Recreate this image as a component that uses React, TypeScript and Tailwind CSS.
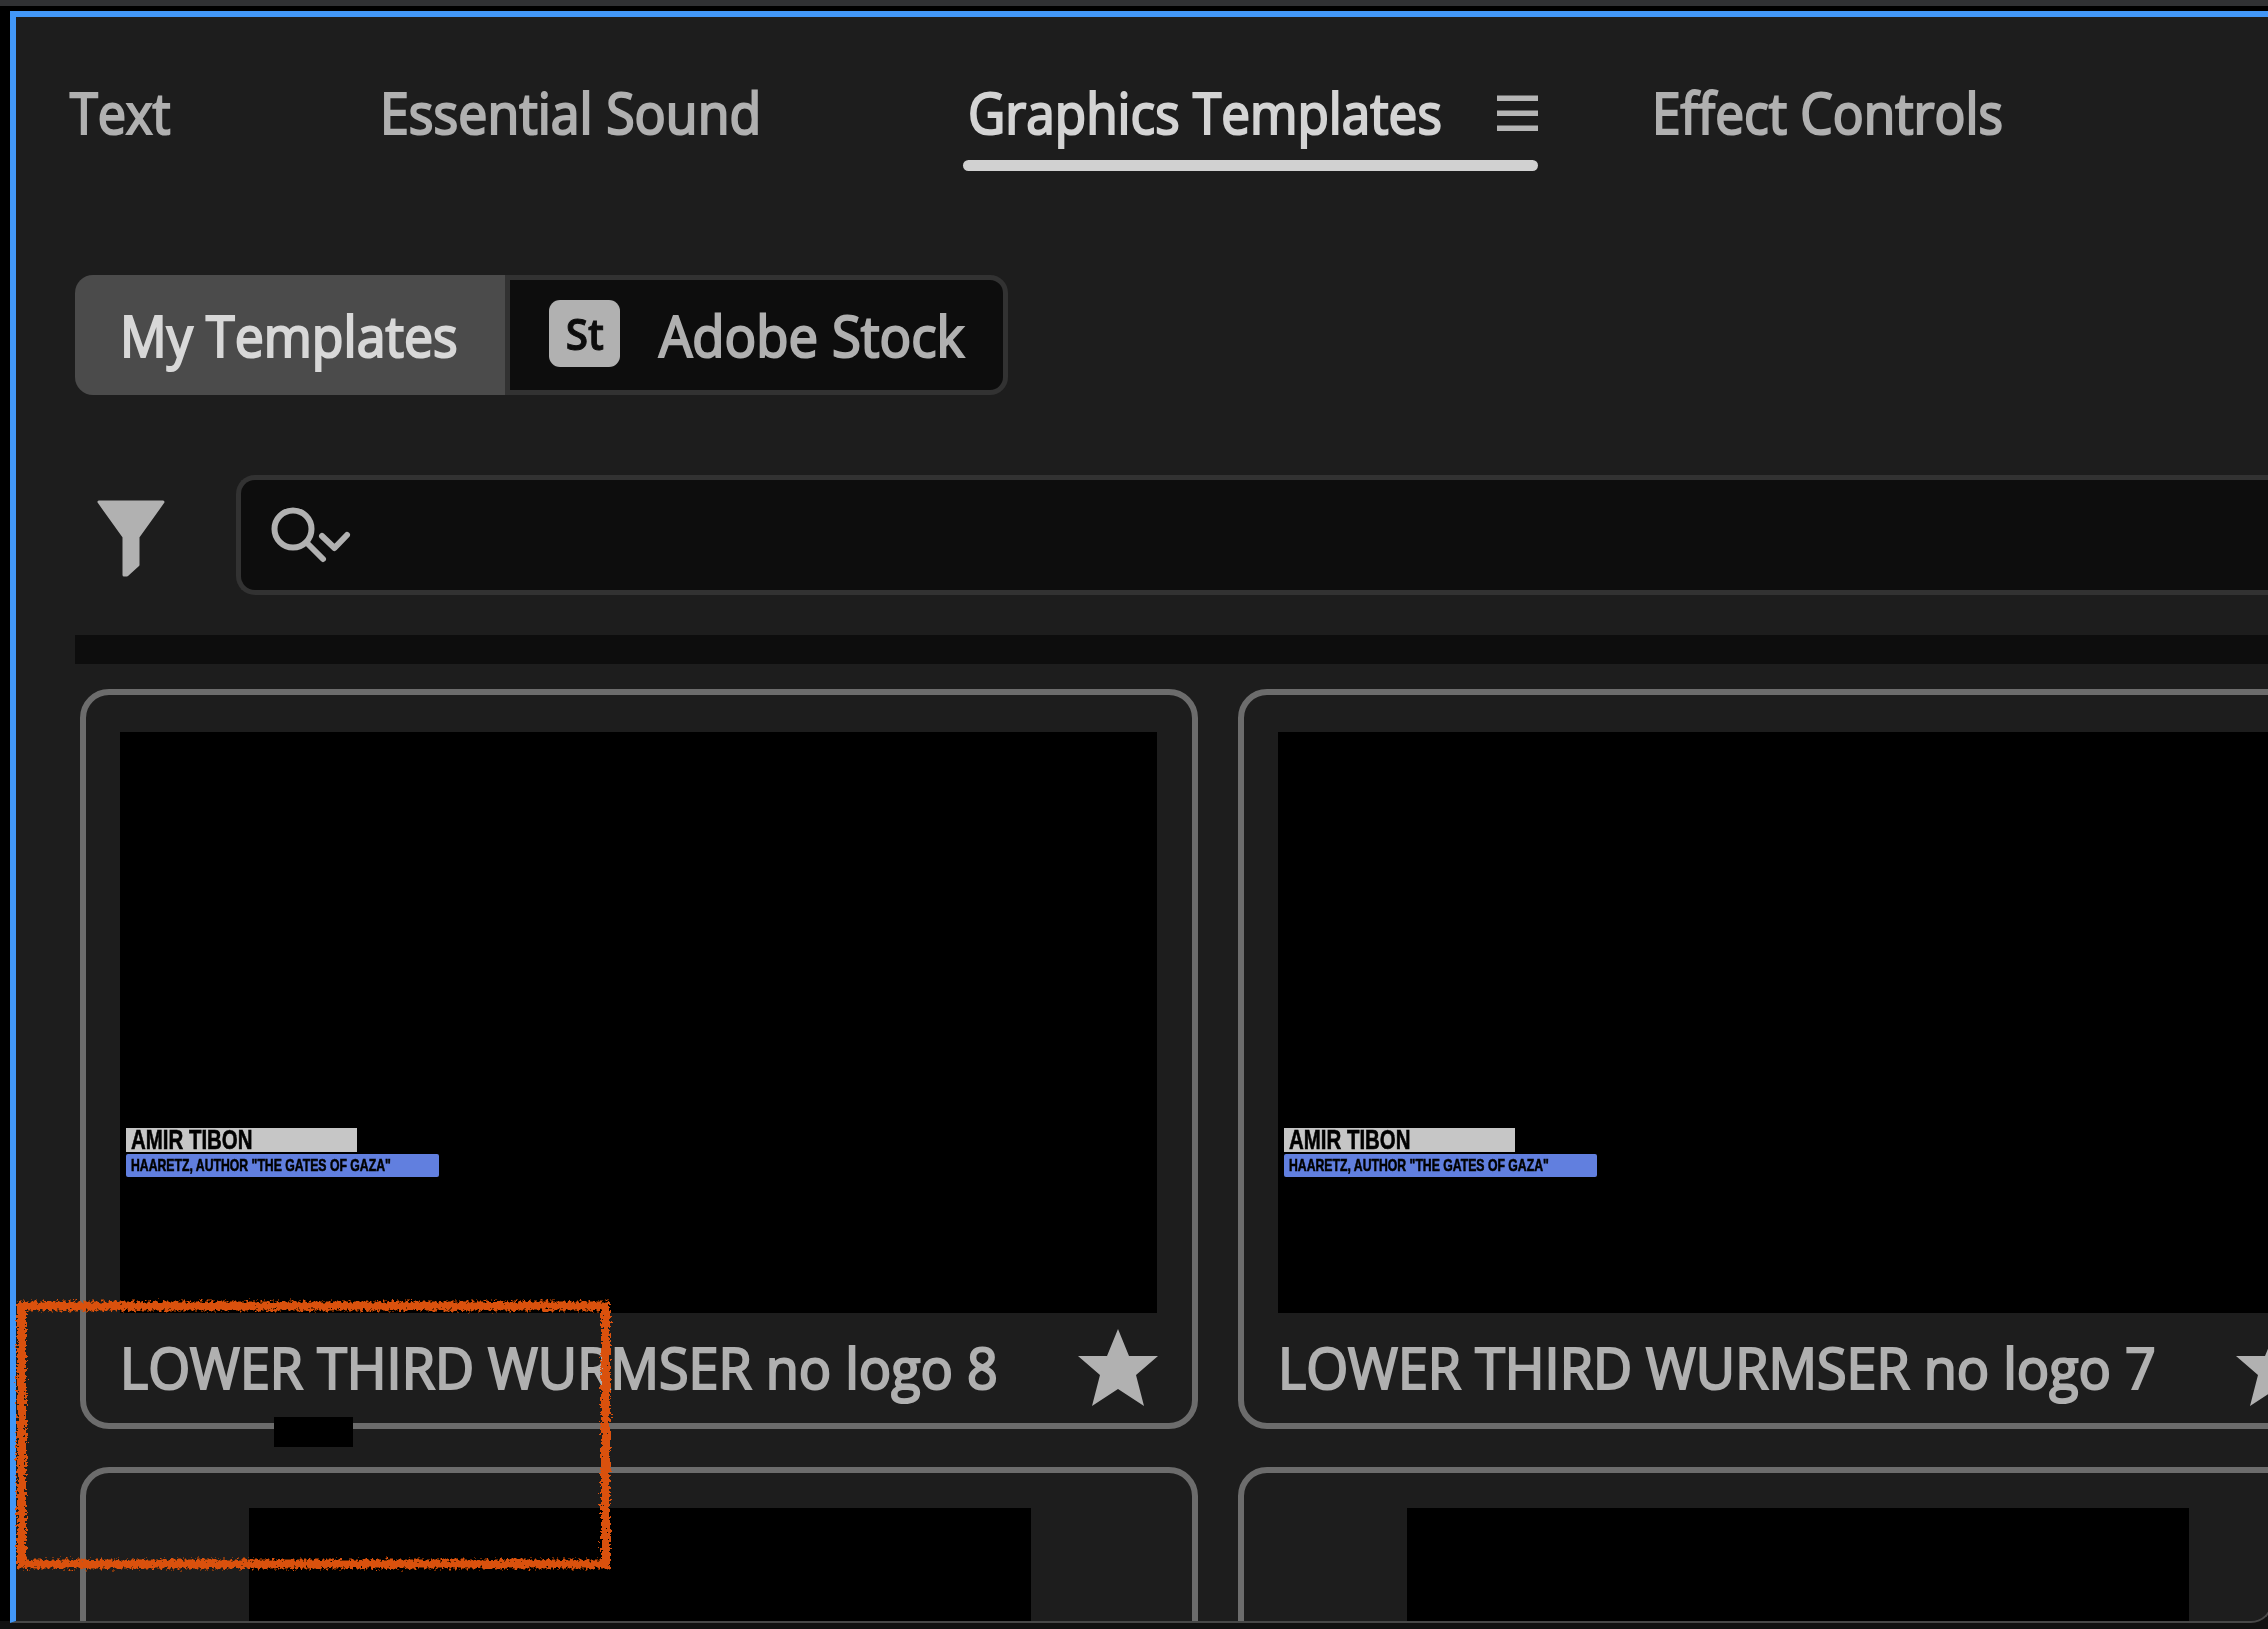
import React from 'react';
import { clsx } from 'clsx';

type Template = {
  name: string;
  wide: boolean;
};

const TEMPLATES: Template[] = [
  { name: 'LOWER THIRD WURMSER no logo 8', wide: true },
  { name: 'LOWER THIRD WURMSER no logo 7', wide: true },
  { name: '', wide: false },
  { name: '', wide: false },
];

function Label({ className, children }: { className?: string; children: React.ReactNode }) {
  return (
    <span
      className={clsx(
        'block origin-left whitespace-nowrap text-[57px] leading-[80px] [-webkit-text-stroke:2.2px_currentColor]',
        className
      )}
    >
      {children}
    </span>
  );
}

function Tabs() {
  return (
    <nav className="flex h-[258px] text-[#b0b0b0]">
      <div className="ml-[54px] w-[310px] pt-[55px]">
        <Label className="scale-x-[0.885]">Text</Label>
      </div>
      <div className="w-[583px] pt-[55px]">
        <Label className="scale-x-[0.91]">Essential Sound</Label>
      </div>
      <div className="w-[575px] pt-[55px] text-[#d4d4d4]">
        <div className="flex h-[88px] justify-between">
          <div className="ml-[5px] w-[480px]">
            <Label className="scale-x-[0.9]">Graphics Templates</Label>
          </div>
          <svg viewBox="0 0 41 38" className="mt-[22px] h-[38px] w-[41px] shrink-0 fill-[#b5b5b5]">
            <rect y="1.500" width="41" height="5.500" />
            <rect y="16.500" width="41" height="5.500" />
            <rect y="31.500" width="41" height="5.500" />
          </svg>
        </div>
        <div className="h-[11px] rounded-full bg-[#d1d1d1]" />
      </div>
      <div className="ml-[114px] pt-[55px]">
        <Label className="scale-x-[0.902]">Effect Controls</Label>
      </div>
    </nav>
  );
}

function SourceSwitch() {
  return (
    <div className="ml-[59px] flex h-[120px] w-[933px]">
      <button className="w-[430px] rounded-l-[18px] bg-[#4b4b4b] pl-[45px] text-left text-[#d8d8d8]">
        <Label className="scale-x-[0.91]">My Templates</Label>
      </button>
      <button className="flex flex-1 items-center rounded-r-[18px] border-[5px] border-[#323232] bg-[#0d0d0d] pl-[39px] text-left text-[#b0b0b0]">
        <span className="mb-[4px] flex h-[67px] w-[71px] shrink-0 items-center justify-center rounded-[11px] bg-[#b1b1b1] text-[44px] font-semibold text-[#0d0d0d]">
          <span className="scale-x-[0.92] [-webkit-text-stroke:1px_currentColor]">St</span>
        </span>
        <Label className="ml-[39px] scale-x-[0.925]">Adobe Stock</Label>
      </button>
    </div>
  );
}

function SearchRow() {
  return (
    <div className="mt-[80px] flex h-[120px]">
      <svg viewBox="0 0 70 78" className="mt-[25px] ml-[80px] h-[78px] w-[70px] shrink-0">
        <path
          d="M3 2H67L42 37V65L31 75H28V37Z"
          fill="#b1b1b1"
          stroke="#b1b1b1"
          strokeWidth="3"
          strokeLinejoin="round"
        />
      </svg>
      <div className="ml-[70px] flex-1 rounded-l-[19px] border-[5px] border-r-0 border-[#323232] bg-[#0d0d0d]">
        <svg
          viewBox="0 0 90 70"
          className="mt-[20px] ml-[25px] h-[70px] w-[90px] fill-none stroke-[#b1b1b1] stroke-[6]"
          strokeLinecap="round"
          strokeLinejoin="round"
        >
          <circle cx="27" cy="29" r="18.5" />
          <path d="M41 43L57 59" />
          <path d="M56 36L68.500 48L81 35" />
        </svg>
      </div>
    </div>
  );
}

function LowerThird() {
  return (
    <div className="flex flex-col items-start gap-[2px] pt-[396px] pl-[6px] font-['Liberation_Sans',sans-serif] font-bold text-black">
      <div className="h-[24px] w-[231px] bg-[#c6c6c6] pl-[5px]">
        <span className="block origin-left scale-x-[0.73] text-[28px] leading-[23px] whitespace-nowrap [-webkit-text-stroke:0.6px_currentColor]">
          AMIR TIBON
        </span>
      </div>
      <div className="h-[23px] w-[313px] rounded-[2px] bg-[#617fdf] pl-[5px]">
        <span className="block origin-left scale-x-[0.72] text-[17px] leading-[24px] whitespace-nowrap [-webkit-text-stroke:0.6px_currentColor]">
          HAARETZ, AUTHOR "THE GATES OF GAZA"
        </span>
      </div>
    </div>
  );
}

function TemplateCard({ template }: { template: Template }) {
  if (!template.wide) {
    return (
      <div className="h-[740px] w-[1118px] shrink-0 rounded-[29px] border-[6px] border-[#6c6c6c]">
        <div className="mt-[35px] ml-[163px] h-[581px] w-[782px] bg-black" />
      </div>
    );
  }

  return (
    <div className="h-[740px] w-[1118px] shrink-0 rounded-[29px] border-[6px] border-[#6c6c6c] pt-[37px] pl-[34px]">
      <div className="h-[581px] w-[1037px] bg-black">
        <LowerThird />
      </div>
      <div className="flex text-[#b0b0b0]">
        <div className="w-[958px] pt-[14px]">
          <Label className="scale-x-[0.946]">{template.name}</Label>
        </div>
        <svg viewBox="0 0 80 77" className="mt-[16px] h-[77px] w-[80px] shrink-0 fill-[#b1b1b1]">
          <path d="M40 0L51 27H80L58 46L66 77L40 60L14 77L22 46L0 27H29Z" />
        </svg>
      </div>
    </div>
  );
}

function Marker() {
  return (
    <svg viewBox="0 0 620 290" className="pointer-events-none absolute top-[1290px] left-[6px] h-[290px] w-[620px]">
      <defs>
        <filter id="chalk" x="0" y="0" width="620" height="290" filterUnits="userSpaceOnUse">
          <feTurbulence type="fractalNoise" baseFrequency="0.35" numOctaves="3" seed="4" result="noise" />
          <feDisplacementMap in="SourceGraphic" in2="noise" scale="9" xChannelSelector="R" yChannelSelector="G" />
        </filter>
      </defs>
      <rect x="15.500" y="16" width="584" height="258" fill="none" stroke="#da5108" strokeWidth="9" filter="url(#chalk)" />
    </svg>
  );
}

export default function App() {
  return (
    <div className="relative flex h-[1629px] w-[2268px] flex-col overflow-hidden bg-[#111111] font-['Open_Sans',sans-serif]">
      <div className="h-[11px] shrink-0 border-t-[6px] border-[#303133] bg-black" />
      <div className="flex shrink-0">
        <div className="h-[1610px] w-[10px] shrink-0 bg-black" />
        <main className="h-[1612px] w-[2263px] shrink-0 overflow-hidden rounded-br-[22px] border-t-[6px] border-r-[2px] border-b-[2px] border-l-[6px] border-t-[#4297f7] border-r-[#484848] border-b-[#484848] border-l-[#4297f7] bg-[#1d1d1d]">
          <Tabs />
          <SourceSwitch />
          <SearchRow />
          <div className="mt-[40px] ml-[59px] h-[29px] bg-[#0d0d0d]" />
          <div className="mt-[25px] ml-[64px] grid w-[2276px] grid-cols-2 gap-x-[40px] gap-y-[38px]">
            {TEMPLATES.map((template, index) => (
              <TemplateCard key={index} template={template} />
            ))}
          </div>
        </main>
      </div>

      {/* Drop handle between the card rows */}
      <div className="absolute top-[1417px] left-[274px] h-[30px] w-[79px] bg-black" />
      <Marker />
    </div>
  );
}
